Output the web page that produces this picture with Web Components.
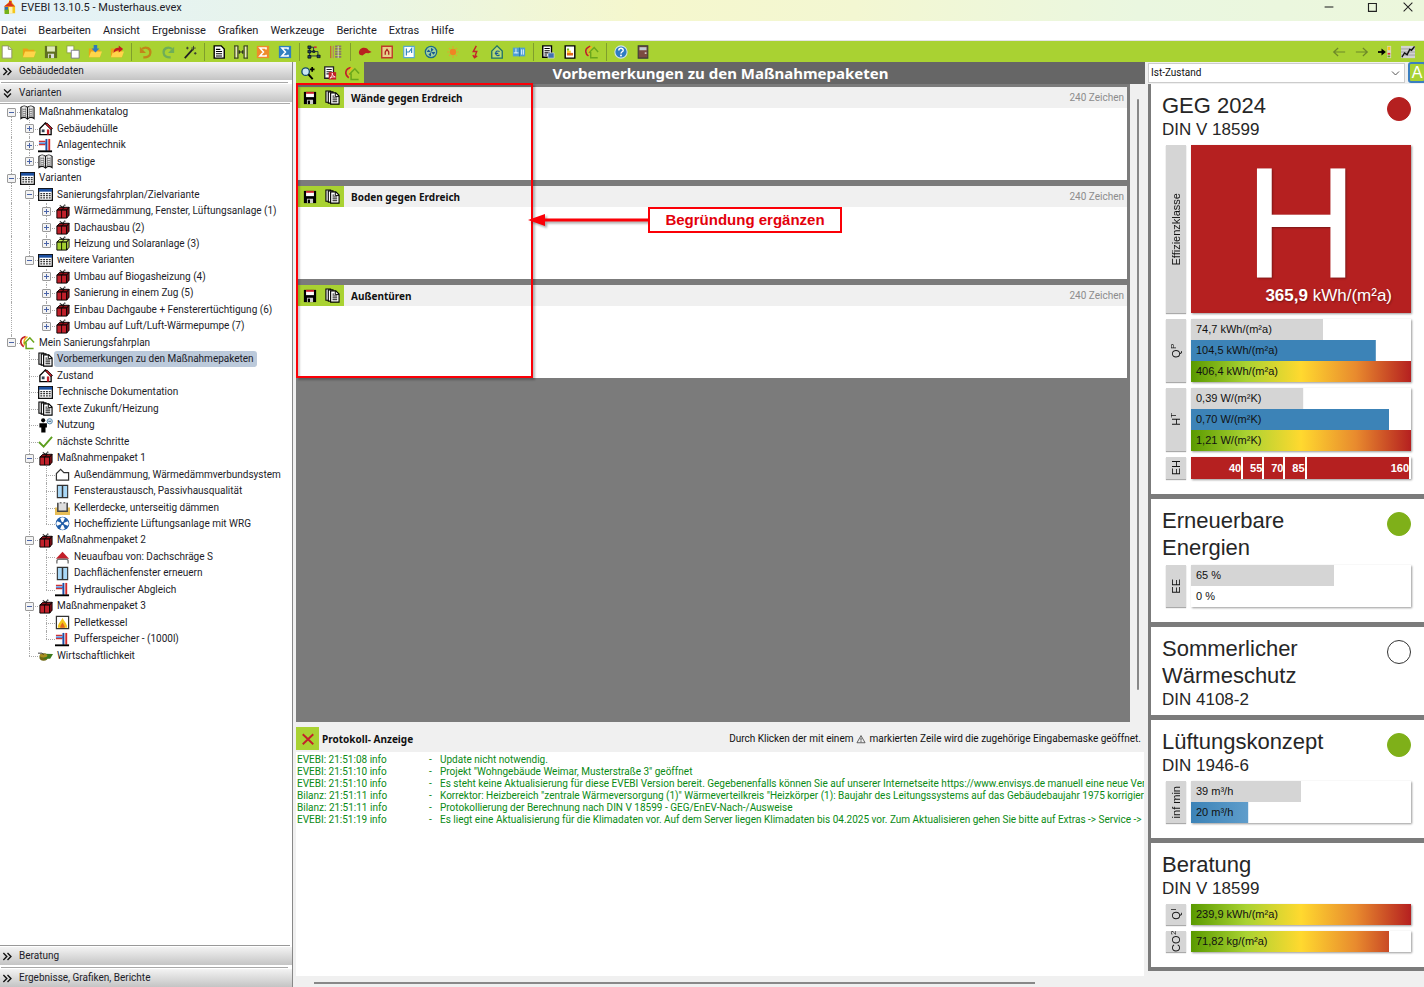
<!DOCTYPE html>
<html lang="de">
<head>
<meta charset="utf-8">
<title>EVEBI 13.10.5 - Musterhaus.evex</title>
<style>
  html, body { margin: 0; height: 100%; }
  body {
    --lime: #a9d232;
    --grey: #7b7b7b;
    --face: #f0f0f0;
    --ui: Roboto, "Liberation Sans", Arial, sans-serif;
    --kpi: "Liberation Sans", Arial, sans-serif;
    --menu: Roboto, "Open Sans", sans-serif;
    --strong: "Noto Sans", "Open Sans", sans-serif;
    font: 10px/16px var(--ui);
    color: #1c1c28;
    background: var(--face);
  }
</style>
</head>
<body>
<evebi-app></evebi-app>

<script>
const house = (x = '') => `<path d="M2 8 8 2l6 6v6.500H2z" fill="#fff" stroke="#000" stroke-width="1.400"/><path d="M7 2.500h3L15.500 8l-2 1z" fill="#c3202a" stroke="#000" stroke-width=".8"/><path d="M4 9h3v3H4z" fill="#345"/><path d="M9.500 9H12v5.500H9.500z" fill="#c3202a"/>${x}`;
const gift = (a, b) => `<path d="M2 6.500 5 3.500h10L12.500 6.500z" fill="${b}" stroke="#000"/><path d="M2 6.500h10.500v8.500H2z" fill="${a}" stroke="#000"/><path d="M12.500 6.500 15 3.500v8.500l-2.500 3z" fill="${b}" stroke="#000"/><path d="M7 6.500V15M7 6.500l3-3" stroke="#000" fill="none" stroke-width=".9"/><path d="M8 3.500C5 0 4 2 8 3.500 10 0 13 0 8.500 3.500" fill="none" stroke="#000" stroke-width=".8"/>`;
const pages = `<path d="M1 1h5v12H1z" fill="#fff" stroke="#000" stroke-width="1.200"/><path d="M3.500 2h5v12h-5z" fill="#fff" stroke="#000" stroke-width="1.200"/><path d="M6 3h5.500L15 6.500V15H6z" fill="#fff" stroke="#000" stroke-width="1.200"/><path d="M11 3v4h4M8 8.500h5M8 10.500h5M8 12.500h5M8 6.500h2" fill="none" stroke="#000"/>`;
const book = `<path d="M8 2.500C6 .5 3 .5 1 2.500v12c2-1.500 5-1.500 7 .5 2-2 5-2 7-.5v-12C13 .5 10 .5 8 2.500z" fill="#f2f2f2" stroke="#111" stroke-width="1.200"/><path d="M8 2.500V15" stroke="#111" stroke-width="1.200"/><path d="M3 3v10M5.700 2.500v10.500M10.300 2.500v10.500M13 3v10" stroke="#777" stroke-width=".7"/><path d="M2.800 5c1.500-.8 3-.5 4 .3M2.800 7.300c1.500-.8 3-.5 4 .3M2.800 9.600c1.500-.8 3-.5 4 .3M2.800 11.900c1.500-.8 3-.5 4 .3M9.200 5.300c1.500-.8 3-.8 4-.3M9.200 7.600c1.500-.8 3-.8 4-.3M9.200 9.900c1.500-.8 3-.8 4-.3M9.200 12.200c1.500-.8 3-.8 4-.3" stroke="#555" fill="none" stroke-width=".8"/>`;
const grid = `<path d="M.7 1.700h14.600v12.600H.7z" fill="#fff" stroke="#111" stroke-width="1.400"/><path d="M1 2h14v3H1z" fill="#1b4fa0"/><path d="M2.500 7h11M2.500 9.300h11M2.500 11.600h11" stroke="#333" stroke-width="1.300" stroke-dasharray="2 1"/>`;
const isfp = `<path d="M4 12.500C0 10 0 5 3 3l3-1.500" fill="none" stroke="#c3202a" stroke-width="1.800"/><path d="M8 2C4.500 3 3.500 8 5 11" fill="none" stroke="#f2b01e" stroke-width="1.800"/><path d="M4.500 9 10.500 3l4.500 5M6.500 8v6.500h8" fill="none" stroke="#6aa61c" stroke-width="1.600"/>`;
const pipes = `<path d="M1 3.500h7M1 7h7" stroke="#c33" stroke-width="1.300"/><path d="M1 5.500h8v8" fill="none" stroke="#2a66c8" stroke-width="1.300"/><path d="M9 1v12.500" stroke="#1d4fa5" stroke-width="2"/><path d="M12 1v12.500" stroke="#d02a2a" stroke-width="2"/><path d="M0 14.200h15" stroke="#000" stroke-width="2"/>`;
const win = `<path d="M2.500 1.500h11v13h-11z" fill="#a9d8f7" stroke="#333" stroke-width="1.200"/><path d="M8 1.500v13" stroke="#333" stroke-width="1.600"/>`;
const floppy = c => `<path d="M1 1h14v14H1z" fill="${c}"/><path d="M3.500 1.500h9v6h-9z" fill="#dfeab8"/><path d="M4.500 10h7v5h-7z" fill="#ddd"/><path d="M5.500 11h2.500v4H5.500z" fill="${c}"/>`;
const folder = `<path d="M1 4h5l1.500 1.500H14V14H1z" fill="#e8a317"/><path d="M3.500 7.500H16L13.500 14H1z" fill="#ffd54a"/>`;

const ICONS = {
  app: `<path d="M3 7 8 2V0h3v2l4 5v8H3z" fill="#f4c61c"/><path d="M8 1h3v3l4 3.500H2L8 3z" fill="#d9331e"/><path d="M3 8h4v4H3z" fill="#2c6fb5"/><path d="M3 11h5v5H3z" fill="#73b21b"/><path d="M8 8h4v7H8z" fill="#fff2b0"/>`,
  neu: `<path d="M2.500 1h7l4 4v10h-11z" fill="#fff" stroke="#8a8a6a"/><path d="M9.500 1v4h4" fill="#ddd" stroke="#8a8a6a"/>`,
  open: folder,
  save: floppy('#5f7020'),
  copies: `<path d="M1 1h8v8H1z" fill="#fff" stroke="#8aa040"/><path d="M6 6h9v9H6z" fill="#fff" stroke="#778"/>`,
  imp: folder + `<path d="M6.500 0h4v4H13L8.500 8.500 4 4h2.500z" fill="#2f79bb"/>`,
  exp: folder + `<path d="M4 9c0-5 3-6 6-6V.5L15 4.500l-5 4V6C8 6 6 7 4 9z" fill="#c4201f"/>`,
  undo: `<path d="M3.500 4.500C8 1 13.500 4 13 9c-.4 4-4 5.500-8 5" fill="none" stroke="#c28519" stroke-width="2.600"/><path d="M1 2v7h7z" fill="#c28519"/>`,
  redo: `<path d="M12.500 4.500C8 1 2.500 4 3 9c.4 4 4 5.500 8 5" fill="none" stroke="#6fae57" stroke-width="2.600"/><path d="M15 2v7H8z" fill="#6fae57"/>`,
  wand: `<path d="M2 15 11 5" stroke="#222" stroke-width="2"/><path d="M12 1v5M9.500 3.500h5M5 2v3M3.500 3.500h3M14 8v3M12.500 9.500h3" stroke="#333"/>`,
  doc: `<path d="M2.500 1h8L14 4.500V15H2.500z" fill="#fff" stroke="#000" stroke-width="1.600"/><path d="M4.500 5h5M4.500 7.500h7M4.500 10h7M4.500 12.500h7" stroke="#000" stroke-width="1.200"/>`,
  wall: `<path d="M0 1h5M0 15h5M11 1h5M11 15h5" stroke="#222"/><path d="M1 1v14M4.500 1v14M11.500 1v14M15 1v14" stroke="#333" stroke-width="1.200"/><path d="M6 8h4.500M6 6v4M10 6v4" stroke="#222" stroke-width="1.300"/><path d="M2.700 2v12M13.300 2v12" stroke="#e9e0d0" stroke-width="1.600"/>`,
  sumo: `<path d="M1 1h14v14H1z" fill="#ef8b2a"/><path d="M11.500 5V3.500H4.500L8.500 8l-4 4.500h7V11" fill="none" stroke="#fff" stroke-width="1.800"/>`,
  sumb: `<path d="M1 1h14v14H1z" fill="#2f7fc0"/><path d="M11.500 5V3.500H4.500L8.500 8l-4 4.500h7V11" fill="none" stroke="#fff" stroke-width="1.800"/>`,
  flow: `<path d="M3 2.500h4.500v5h5v5M3 2.500v10h10M3 7.500h5" fill="none" stroke="#234" stroke-width="1.100"/><path d="M1 1h3.500v3H1zM1 6h3.500v3H1zM1 12h3.500v3H1zM11.500 11.500H15v3h-3.500zM6.500 6.500h2.500v2H6.500z" fill="#246" stroke="#000" stroke-width=".7"/><path d="M8 1.500h3v2H8z" fill="#c33"/>`,
  layers: `<path d="M2 1v14" stroke="#c33"/><path d="M5 1v14" stroke="#b86" stroke-width="1.500"/><path d="M7 1.500h7M7 4.500h7M7 7.500h7M7 10.500h7M7 13.500h7" stroke="#876" stroke-width="2"/><path d="M10.500 1v14" stroke="#ddd"/>`,
  cap: `<path d="M1 9C1 3 9 1 12 6l3.500 2-3.500 1.500L9 9l-4 3-3-1z" fill="#b8211f"/>`,
  boiler: `<path d="M2 1.500h12v13H2z" fill="#e7d089" stroke="#c0392b" stroke-width="1.600"/><path d="M6 11V8l2-3 2 3v3" fill="none" stroke="#b02020" stroke-width="1.500"/>`,
  pump: `<path d="M2 1.500h12v13H2z" fill="#fff" stroke="#5ba7d4" stroke-width="1.400"/><path d="M5 4v8M5 8h3l3-4v5" fill="none" stroke="#3689bd" stroke-width="1.400"/>`,
  fan: `<circle cx="8" cy="8" r="6.500" fill="#9fd0a0" stroke="#1d6a8c" stroke-width="1.400"/><path d="M8 8V3l3 2zM8 8h5l-2 3zM8 8v5l-3-2zM8 8H3l2-3z" fill="#195b91"/>`,
  sun: `<circle cx="8" cy="8" r="3.600" fill="#ef8424"/><path d="M8 1.500v2M8 12.500v2M1.500 8h2M12.500 8h2M3.500 3.500l1.500 1.500M11 11l1.500 1.500M12.500 3.500 11 5M5 11l-1.500 1.500" stroke="#e8a02e" stroke-width="1.300"/>`,
  bolt: `<path d="M9.500 1 6 7.500h4L7.500 14M5.500 11.500l2 3 3-2" fill="none" stroke="#c4242a" stroke-width="1.600"/>`,
  ehouse: `<path d="M2 7 8 1l6 6v8H2z" fill="#b6dc70" stroke="#20706a" stroke-width="1.500"/><path d="M11 7.500c-3-1.500-4.500 0-4.500 2s2 3.500 4.500 2M5.500 9.500h4" fill="none" stroke="#1a5a94" stroke-width="1.300"/>`,
  panel: `<path d="M1 3h14v10H1z" fill="#4f9fd4"/><path d="M4.500 4v5h3M11 5v6M13 5v6M2 9h3" fill="none" stroke="#e6f4ff" stroke-width="1.100"/><path d="M8.500 3v10" stroke="#2a6ea6"/>`,
  report: `<path d="M2 1h10v13H2z" fill="#fff" stroke="#000" stroke-width="1.600"/><path d="M4 4h6M4 6.500h6M4 9h6M4 11.500h3" stroke="#000" stroke-width="1.200"/><path d="M8 9h7v6H8z" fill="#3e6fb0" stroke="#ddd" stroke-width=".8"/>`,
  label: `<path d="M2.500 1h11v14h-11z" fill="#fff" stroke="#000" stroke-width="1.600"/><path d="M4.500 4H7v2.500H4.500z" fill="#7ab51d"/><path d="M4.500 6.500H9V9H4.500z" fill="#fbd12d"/><path d="M4.500 9h7v3h-7z" fill="#e06a1c"/>`,
  isfp,
  help: `<circle cx="8" cy="8" r="7" fill="#2e7cc2" stroke="#cfe2ee" stroke-width="1.200"/><path d="M5.500 6.200C5.500 3 10.800 3 10.500 6.200 10.300 7.800 8 7.800 8 9.800" fill="none" stroke="#fff" stroke-width="1.700"/><circle cx="8" cy="12" r="1.100" fill="#fff"/>`,
  door: `<path d="M2.500 1h11v14h-11z" fill="#7c4a40" stroke="#3a3a3a" stroke-width="1.200"/><path d="M4 2.500h8V6H4z" fill="#c3cbd2"/><path d="M10 8.500h2V10h-2z" fill="#eee"/>`,
  left: `<path d="M15 8H2M7 3.500 2 8l5 4.500" fill="none" stroke="#6d8729" stroke-width="1.400"/>`,
  right: `<path d="M1 8h13M9 3.500 14 8l-5 4.500" fill="none" stroke="#6d8729" stroke-width="1.400"/>`,
  goto: `<path d="M0 8h5" stroke="#000" stroke-width="2"/><path d="M4 4l5 4-5 4z" fill="#000"/><path d="M10.500 1H15v14h-4.500z" fill="#d9d6c0"/><path d="M11 2h3v4h-3z" fill="#f4c61c"/><path d="M11 9h3v2h-3z" fill="#d33"/><path d="M11 12h3v2h-3z" fill="#6a2"/>`,
  chart: `<path d="M0 1h16v14H0z" fill="#d2d2d2"/><path d="M0 4.500h16M0 8h16M0 11.500h16" stroke="#999"/><path d="M1 14 4 9l3 2 3-6 2 1 3.500-4.500" fill="none" stroke="#111" stroke-width="1.600"/>`,
  search: `<circle cx="6" cy="6" r="4" fill="#c9e6f5" stroke="#124a6a" stroke-width="1.400"/><path d="M9 9l4.500 5" stroke="#000" stroke-width="2"/><path d="M10.500 3.500h5M13 1v5" stroke="#000" stroke-width="1.800"/>`,
  pdf: `<path d="M2 1h10v13H2z" fill="#fff" stroke="#222" stroke-width="1.500"/><path d="M4 4h6M4 6.500h6M4 9h3" stroke="#222" stroke-width="1.200"/><path d="M6.500 7H15v8.500H6.500z" fill="#c3202a"/><path d="M8 14c2-2 3-4 2.500-6 .5 3 1.500 4 3.500 4.500-2-.3-4 .2-6 1.500z" fill="none" stroke="#fff" stroke-width=".9"/>`,
  floppy: `<path d="M1 1h14v14H1z" fill="#000"/><path d="M3.500 1.500h9V7h-9z" fill="#fff"/><path d="M3.500 1h9v2.200h-9z" fill="#c8202c"/><path d="M4.500 10h7v5h-7z" fill="#ccc"/><path d="M5.500 11H8v4H5.500z" fill="#000"/>`,
  pages, book, grid, pipes, win,
  house: house(),
  red: gift('#c0202a', '#8f1018'),
  green: gift('#a5d030', '#c6e85a'),
  person: `<circle cx="5.500" cy="2.500" r="2.200" fill="#000"/><path d="M1.500 5.500h8V10H8v5.500H3.500V10h-2z" fill="#000"/><circle cx="12.500" cy="3.500" r="2.800" fill="#d4e9f7" stroke="#5c88a8"/><path d="M11 3.500h3" stroke="#456"/>`,
  check: `<path d="M1 8.500 6 13.500 15 3" fill="none" stroke="#5c9e1e" stroke-width="2"/>`,
  outline: `<path d="M1.500 14V7L6 2.500 9.500 6h5v8z" fill="#fff" stroke="#333" stroke-width="1.300"/>`,
  cellar: `<path d="M0 8h16v8H0z" fill="#e7bd55"/><path d="M3 3v9h10V3" fill="#ddd" stroke="#444" stroke-width="1.600"/><path d="M5 3h2M9 3h2" stroke="#777" stroke-width="1.500"/>`,
  vent: `<circle cx="8" cy="8" r="7.300" fill="#1f5da8"/><path d="M8 8 5.500 2.500C7 1 9 1 10.500 2.500zM8 8l5.500-2.500C15 7 15 9 13.500 10.500zM8 8l2.500 5.500C9 15 7 15 5.500 13.500zM8 8l-5.500 2.500C1 9 1 7 2.500 5.500z" fill="#fff"/><circle cx="8" cy="8" r="1.600" fill="#1f5da8"/>`,
  roof: `<path d="M8 3 15 10.500H1z" fill="#c3202a"/><path d="M2 15.500v-3l1-1.500h10l1 1.500v3" fill="none" stroke="#777" stroke-width="1.500"/>`,
  flame: `<path d="M1.500 1.500h13v13h-13z" fill="#fff" stroke="#333" stroke-width="1.300"/><path d="M8 3c1 3 5 6 5 10.500H3C3 9 7 6 8 3z" fill="#f3c41c"/><path d="M8 8c1 2 2.500 3.500 2.500 5.500h-5C5.500 11.500 7 10 8 8z" fill="#e0651c"/>`,
  money: `<ellipse cx="6" cy="9.500" rx="4.500" ry="4" fill="#6f6a14"/><path d="M7 6 16 6.500l-3 5H6z" fill="#3d7a1d"/><ellipse cx="6" cy="8" rx="4" ry="2" fill="#a98f1f"/><path d="M0 5.500h4l2 1.500" stroke="#333" fill="none"/>`,
  close: `<path d="M2 2.500 14 14M14 2.500 2 14" stroke="#c3202a" stroke-width="2.200"/>`,
  min: `<path d="M3 8h10" stroke="#222" stroke-width="1.200"/>`,
  max: `<path d="M4 4h9v9H4z" fill="none" stroke="#222" stroke-width="1.300"/>`,
  quit: `<path d="M3 3l10 10M13 3 3 13" stroke="#222" stroke-width="1.200"/>`,
  more: `<path d="M2 3l5 5-5 5M8 3l5 5-5 5" fill="none" stroke="#111" stroke-width="2"/>`,
  down: `<path d="M3 2l5 5 5-5M3 8l5 5 5-5" fill="none" stroke="#111" stroke-width="2"/>`,
  warn: `<path d="M8 2.500 14.500 14h-13z" fill="#eee" stroke="#444" stroke-width="1.300"/><path d="M8 6v4.500M8 11.500v1.500" stroke="#333" stroke-width="1.400"/>`
};

const define = (name, css, html, setup) => customElements.define(name, class extends HTMLElement {
  connectedCallback() {
    if (this.shadowRoot) return;
    const root = this.attachShadow({ mode: 'open' });
    root.innerHTML = `<style>*{box-sizing:border-box}button{font:inherit;color:inherit;border:0;padding:0;margin:0;background:none}${css}</style>` +
      (typeof html === 'function' ? html(this) : html);
    if (setup) setup(this, root);
  }
});
const ico = (name, size = 16) => `<ui-icon name="${name}" style="--size:${size}px"></ui-icon>`;

define('ui-icon',
  `:host{display:inline-flex;flex:none;width:var(--size,16px);height:var(--size,16px)} svg{width:100%;height:100%;display:block}`,
  el => `<svg viewBox="0 0 16 16" aria-hidden="true">${ICONS[el.getAttribute('name')]}</svg>`);

define('title-bar', `
  :host{display:flex;align-items:flex-start;height:21px;padding-left:2px;font:11px/15px var(--menu);
    background:linear-gradient(90deg,#e3f1fa 0,#e9f5e6 25%,#f5f7cd 45%,#f3f7d2 60%,#eaf7e0 80%,#ecf7dc 100%)}
  .name{flex:1;padding-left:5px}
  .win{display:flex} button{width:41px;height:14px;display:grid;place-items:center}
  .win button:first-child{width:44px} .win button:last-child{width:32px}`,
  `${ico('app', 14)}<span class="name">EVEBI 13.10.5 - Musterhaus.evex</span>
   <span class="win"><button aria-label="Minimieren">${ico('min', 14)}</button><button aria-label="Maximieren">${ico('max', 14)}</button><button aria-label="Schließen">${ico('quit', 14)}</button></span>`);

define('menu-bar', `
  :host{display:flex;gap:12px;height:20px;padding-left:1px;background:#fff;border-bottom:1px solid #e4e4e4;font:11px/18px var(--menu)}`,
  ['Datei', 'Bearbeiten', 'Ansicht', 'Ergebnisse', 'Grafiken', 'Werkzeuge', 'Berichte', 'Extras', 'Hilfe'].map(t => `<button>${t}</button>`).join(''));

define('tool-bar', `
  :host{display:flex;justify-content:space-between;height:21px;background:var(--lime);overflow:hidden}
  div{display:flex;align-items:center} .main{margin-left:-4px}
  button{width:22px;height:21px;display:grid;place-items:center}
  i{width:1px;height:18px;margin:0 3px;background:#7f9e2c}
  .nav{padding-right:5px} .nav button{width:23px}`,
  () => {
    const groups = ['neu open save copies imp exp', 'undo redo wand', 'doc wall sumo sumb', 'flow layers', 'cap boiler pump fan sun bolt ehouse panel', 'report label isfp', 'help door'];
    const b = n => `<button aria-label="${n}">${ico(n, 14)}</button>`;
    return `<div class="main">${groups.map(g => g.split(' ').map(b).join('')).join('<i></i>')}</div>
            <div class="nav">${['left', 'right', 'goto', 'chart'].map(b).join('')}</div>`;
  });

define('section-head', `
  :host{display:block}
  button{display:flex;align-items:center;gap:6px;width:100%;height:18px;padding-left:2px;text-align:left;
    background:linear-gradient(#f3f3f3,#dcdcdc 50%,#c4c4c4)}`,
  el => `<button>${ico(el.hasAttribute('open') ? 'down' : 'more', 11)}<slot></slot></button>`);

const TREE = [
  ['Maßnahmenkatalog', 'book', [['Gebäudehülle', 'house', 1], ['Anlagentechnik', 'pipes', 1], ['sonstige', 'book', 1]]],
  ['Varianten', 'grid', [
    ['Sanierungsfahrplan/Zielvariante', 'grid', [['Wärmedämmung, Fenster, Lüftungsanlage (1)', 'red', 1], ['Dachausbau (2)', 'red', 1], ['Heizung und Solaranlage (3)', 'green', 1]]],
    ['weitere Varianten', 'grid', [['Umbau auf Biogasheizung (4)', 'red', 1], ['Sanierung in einem Zug (5)', 'red', 1], ['Einbau Dachgaube + Fensterertüchtigung (6)', 'red', 1], ['Umbau auf Luft/Luft-Wärmepumpe (7)', 'red', 1]]]]],
  ['Mein Sanierungsfahrplan', 'isfp', [
    ['Vorbemerkungen zu den Maßnahmepaketen', 'pages', 0, true], ['Zustand', 'house'], ['Technische Dokumentation', 'grid'], ['Texte Zukunft/Heizung', 'pages'], ['Nutzung', 'person'], ['nächste Schritte', 'check'],
    ['Maßnahmenpaket 1', 'red', [['Außendämmung, Wärmedämmverbundsystem', 'outline'], ['Fensteraustausch, Passivhausqualität', 'win'], ['Kellerdecke, unterseitig dämmen', 'cellar'], ['Hocheffiziente Lüftungsanlage mit WRG', 'vent']]],
    ['Maßnahmenpaket 2', 'red', [['Neuaufbau von: Dachschräge S', 'roof'], ['Dachflächenfenster erneuern', 'win'], ['Hydraulischer Abgleich', 'pipes']]],
    ['Maßnahmenpaket 3', 'red', [['Pelletkessel', 'flame'], ['Pufferspeicher - (1000l)', 'pipes']]],
    ['Wirtschaftlichkeit', 'money']]]
];
define('nav-tree', `
  :host{display:grid;grid-auto-rows:1fr;height:560px;padding-left:3px;overflow:hidden}
  .row{display:flex;align-items:center;white-space:nowrap;min-height:0}
  .g,.t{position:relative;width:17px;align-self:stretch;flex:none}
  .first{width:18px}
  .line::before{content:"";position:absolute;left:8px;top:0;bottom:0;border-left:1px dotted #aaa}
  .start::before{top:50%} .end::before{bottom:50%}
  .t::after{content:"";position:absolute;left:8px;right:0;top:50%;border-top:1px dotted #aaa}
  .t{display:grid;place-items:center}
  .box{position:relative;z-index:1;width:9px;height:9px;border:1px solid #9a9a9a;border-radius:1px;background:linear-gradient(90deg,#4a64a8,#4a64a8) center/5px 1px no-repeat,#f3f3f3}
  .plus{background:linear-gradient(#4a64a8,#4a64a8) center/5px 1px no-repeat,linear-gradient(#4a64a8,#4a64a8) center/1px 5px no-repeat,#f3f3f3}
  .txt{margin-left:1px;padding:0 3px;line-height:16px}
  .sel{background:#bccadb;border-radius:3px}`,
  () => {
    let out = '';
    const walk = (nodes, trail) => nodes.forEach(([text, icon, kids, sel], i) => {
      const last = i === nodes.length - 1, depth = trail.length;
      const guides = trail.map((on, k) => `<span class="g ${k ? '' : 'first'} ${on ? 'line' : ''}"></span>`).join('');
      const box = kids ? `<button class="box ${Array.isArray(kids) ? '' : 'plus'}" aria-label="${text}"></button>` : '';
      out += `<div class="row" role="treeitem" aria-level="${depth + 1}">${guides}<span class="t line ${!depth && !i ? 'start' : ''} ${last ? 'end' : ''}">${box}</span>${ico(icon, 15)}<span class="txt ${sel ? 'sel' : ''}">${text}</span></div>`;
      if (Array.isArray(kids)) walk(kids, [...trail, !last]);
    });
    walk(TREE, []);
    return out;
  },
  el => el.setAttribute('role', 'tree'));

define('side-nav', `
  :host{display:flex;flex-direction:column;border-right:1px solid #888;background:#fff;min-height:0}
  hr{margin:2px 4px 1px 1px;border:0;border-top:1px solid #a8a8a8;width:auto;align-self:stretch}
  .body{flex:1;border-top:1px solid #aaa;border-bottom:1px solid #999;margin:1px 2px 1px 0;min-height:0}`,
  `<section-head>Gebäudedaten</section-head><hr>
   <section-head open>Varianten</section-head>
   <div class="body"><nav-tree></nav-tree></div>
   <section-head>Beratung</section-head><hr>
   <section-head>Ergebnisse, Grafiken, Berichte</section-head>`);

define('text-card', `
  :host{display:flex;flex-direction:column;height:93px;background:#fff}
  header{display:flex;align-items:center;height:21px;background:#f0f0f0}
  .b{display:flex;background:var(--lime)} .b button{width:23px;height:21px;display:grid;place-items:center}
  label{flex:1;padding-left:7px;font:bold 10px/20px var(--strong);color:#111}
  span{color:#8c8c8c;padding-right:3px}
  textarea{flex:1;border:0;resize:none;outline:0;width:100%;padding:2px;font:inherit}`,
  el => `<header><div class="b"><button aria-label="Speichern">${ico('floppy', 14)}</button><button aria-label="Textbausteine">${ico('pages', 15)}</button></div>
    <label for="t">${el.getAttribute('heading')}</label><span>240 Zeichen</span></header><textarea id="t"></textarea>`);

define('call-out', `
  :host{position:absolute;left:0;top:21px;pointer-events:none}
  .frame{position:absolute;left:0;top:0;width:237px;height:295px;border:2px solid #fb0007;box-shadow:2px 2px 2px #0004,inset 2px 2px 2px #0003}
  svg{position:absolute;left:232px;top:128px;overflow:visible;filter:drop-shadow(2px 2px 1px #0005)}
  p{position:absolute;left:352px;top:124px;width:194px;height:26px;margin:0;border:2px solid #fb0007;background:#fff;color:#e3000b;text-align:center;white-space:nowrap;font:bold 15px/21px var(--kpi)}`,
  `<div class="frame"></div><svg width="120" height="18"><path d="M12 9h109" stroke="#fb0007" stroke-width="3"/><path d="M0 9 17 3v12z" fill="#fb0007"/></svg><p><slot></slot></p>`);

define('work-area', `
  :host{display:flex;flex-direction:column;position:relative;min-height:0}
  header{display:flex;height:22px;background:#666}
  .b{display:flex;background:var(--lime);width:68px} .b button{flex:1;display:grid;place-items:center}
  h1{flex:1;margin:0;padding-right:68px;text-align:center;color:#fff;font:bold 15px/22px var(--strong)}
  .scroll{flex:1;display:flex;min-height:0}
  .cards{flex:1;display:flex;flex-direction:column;gap:6px;padding:3px 3px 3px 2px;background:var(--grey)}
  .bar{width:15px;padding:15px 6px 32px 7px;background:var(--face)} .bar i{display:block;height:100%;background:#888;border-radius:1px}`,
  `<header><div class="b"><button aria-label="Suchen">${ico('search', 15)}</button><button aria-label="PDF">${ico('pdf', 14)}</button><button aria-label="Sanierungsfahrplan">${ico('isfp', 15)}</button></div>
     <h1>Vorbemerkungen zu den Maßnahmepaketen</h1></header>
   <div class="scroll"><div class="cards">
     <text-card heading="Wände gegen Erdreich"></text-card><text-card heading="Boden gegen Erdreich"></text-card><text-card heading="Außentüren"></text-card>
   </div><div class="bar"><i></i></div></div>
   <call-out>Begründung ergänzen</call-out>`);

define('log-panel', `
  :host{display:flex;flex-direction:column;height:265px;min-width:0}
  header{display:flex;align-items:center;height:30px;padding:3px 4px 0 0;gap:3px}
  header button{width:23px;height:23px;background:var(--lime);display:grid;place-items:center}
  h2{flex:1;margin:0;font:bold 10px/20px var(--strong);color:#111}
  p{margin:0;display:flex;align-items:center;gap:3px;color:#111}
  .log{flex:1;background:#fff;overflow:hidden;margin-right:1px;padding:2px 0 0 1px}
  table{border-collapse:collapse;color:#0a8a14;table-layout:fixed;width:100%}
  td{padding:0;line-height:12px;height:12px;white-space:nowrap}
  .a{width:132px}.d{width:11px}
  .bar{height:11px;padding:6px 110px 3px 18px} .bar i{display:block;height:2px;background:#888}`,
  () => {
    const rows = [
      ['EVEBI: 21:51:08 info', 'Update nicht notwendig.'],
      ['EVEBI: 21:51:10 info', 'Projekt "Wohngebäude Weimar, Musterstraße 3" geöffnet'],
      ['EVEBI: 21:51:10 info', 'Es steht keine Aktualisierung für diese EVEBI Version bereit. Gegebenenfalls können Sie auf unserer Internetseite https://www.envisys.de manuell eine neue Ver'],
      ['Bilanz: 21:51:11 info', 'Korrektor: Heizbereich "zentrale Wärmeversorgung (1)" Wärmeverteilkreis "Heizkörper (1): Baujahr des Leitungssystems auf das Gebäudebaujahr 1975 korrigiert'],
      ['Bilanz: 21:51:11 info', 'Protokollierung der Berechnung nach DIN V 18599 - GEG/EnEV-Nach-/Ausweise'],
      ['EVEBI: 21:51:19 info', 'Es liegt eine Aktualisierung für die Klimadaten vor. Auf dem Server liegen Klimadaten bis 04.2025 vor. Zum Aktualisieren gehen Sie bitte auf Extras -> Service ->']];
    return `<header><button aria-label="Schließen">${ico('close', 14)}</button><h2>Protokoll- Anzeige</h2>
      <p><span>Durch Klicken der mit einem</span>${ico('warn', 10)}<span>markierten Zeile wird die zugehörige Eingabemaske geöffnet.</span></p></header>
      <div class="log"><table>${rows.map(r => `<tr><td class="a">${r[0]}</td><td class="d">-</td><td>${r[1].replace(/>/g, '&gt;')}</td></tr>`).join('')}</table></div>
      <div class="bar"><i></i></div>`;
  });

define('bar-gauge', `
  :host{display:grid;grid-template-columns:20px 1fr;gap:5px;font-size:11px;color:#111}
  .l{display:grid;place-items:center;background:#d5d5d5;box-shadow:0 1px 1px #0005;min-height:0}
  .l span{writing-mode:vertical-rl;transform:rotate(180deg);white-space:nowrap;line-height:14px}
  sup{font-size:8px;vertical-align:baseline;position:relative;left:2px;line-height:8px}
  .bars{box-shadow:1px 1px 2px #0006}`,
  el => `<div class="l"><span>${el.getAttribute('label').replace(/\^(.)/, '<sup>$1</sup>')}</span></div><div class="bars"><slot></slot></div>`);

define('bar-line', `
  :host{display:grid;height:21px}
  .f,.v{grid-area:1/1}
  .f{background:var(--fill);clip-path:inset(0 calc(100% - var(--to)) 0 0)}
  .v{position:relative;padding-left:5px;line-height:21px}`,
  `<div class="f"></div><div class="v"><slot></slot></div>`,
  el => {
    const fills = { grey: '#d5d5d5', blue: '#3c83b7', sky: 'linear-gradient(90deg,#3c83b7,#5f9dcb 26%)', scale: 'linear-gradient(90deg,#5a9a00,#a9d232 25%,#ffd92f 50%,#e88a2e 75%,#b52020)' };
    el.style.setProperty('--fill', fills[el.getAttribute('kind')] || 'none');
    el.style.setProperty('--to', (el.getAttribute('to') || 0) + '%');
  });

define('class-tile', `
  :host{display:flex;flex-direction:column;align-items:center;box-sizing:border-box;height:168px;padding-top:16px;background:#b52020;color:#fff;text-shadow:1px 1px 2px #0005}
  .h{font-size:158px;line-height:122px}
  .v{align-self:flex-end;padding-right:19px;font-size:17px;line-height:26px}`,
  `<div class="h">H</div><div class="v"><slot></slot></div>`);

define('eh-scale', `
  :host{display:grid;grid-template-columns:52fr 21fr 21fr 21fr 104fr;height:22px;background:#fff}
  span{background:#b52020;color:#fff;border-right:2px solid #fff;text-align:right;font:bold 11px/22px var(--kpi)}`,
  [40, 55, 70, 85, 160].map(n => `<span>${n}</span>`).join(''));

define('kpi-card', `
  :host{display:flex;flex-direction:column;background:#fff;padding:8px 13px 0 11px;color:#262626;font-family:var(--kpi)}
  .top{display:flex;justify-content:space-between;gap:8px}
  h2{margin:0;font:22px/27px var(--kpi);max-width:170px}
  .dot{flex:none;width:24px;height:24px;margin:5px 0 -5px;border-radius:50%;background:var(--dot,#fff);border:1px solid var(--edge,#333)}
  p{margin:0;font-size:17px;line-height:22px}
  .body{display:grid;gap:6px;padding:4px 0 0 4px}
  :host([bars]) .body{padding-bottom:15px}`,
  el => `<div class="top"><h2>${el.getAttribute('heading')}</h2><span class="dot"></span></div>${el.hasAttribute('norm') ? `<p>${el.getAttribute('norm')}</p>` : ''}<div class="body"><slot></slot></div>`);

define('kpi-panel', `
  :host{display:flex;flex-direction:column;min-height:0}
  .pick{display:flex;height:21px;gap:3px}
  .sel{flex:1;position:relative;display:flex;margin-top:1px;background:#fff;border:1px solid #ccc}
  select{appearance:none;flex:1;border:0;background:none;font:inherit;color:#111;padding:0 2px;outline:0}
  .sel svg{position:absolute;right:4px;top:6px}
  .a{width:18px;margin-right:-2px;border:2px solid #3b7fc0;border-radius:3px;background:var(--lime);color:#fff;font:16px/17px var(--kpi)}
  .list{display:flex;flex-direction:column;gap:5px;background:var(--grey);margin-top:1px;padding:0 0 4px 3px}
  .ok{--dot:#7fb019;--edge:#7fb019}.bad{--dot:#b52020;--edge:#b52020}`,
  `<div class="pick"><div class="sel"><select aria-label="Variante"><option>Ist-Zustand</option></select><svg width="9" height="7"><path d="M1 1.500l3.500 3.500L8 1.500" fill="none" stroke="#555"/></svg></div><button class="a">A</button></div>
   <div class="list">
    <kpi-card class="bad" bars heading="GEG 2024" norm="DIN V 18599">
      <bar-gauge label="Effizienzklasse"><class-tile><b>365,9</b> kWh/(m²a)</class-tile></bar-gauge>
      <bar-gauge label="Q^P"><bar-line kind="grey" to="60">74,7 kWh/(m²a)</bar-line><bar-line kind="blue" to="84">104,5 kWh/(m²a)</bar-line><bar-line kind="scale" to="100">406,4 kWh/(m²a)</bar-line></bar-gauge>
      <bar-gauge label="H^T"><bar-line kind="grey" to="51">0,39 W/(m²K)</bar-line><bar-line kind="blue" to="90">0,70 W/(m²K)</bar-line><bar-line kind="scale" to="100">1,21 W/(m²K)</bar-line></bar-gauge>
      <bar-gauge label="EH"><eh-scale></eh-scale></bar-gauge>
    </kpi-card>
    <kpi-card class="ok" bars heading="Erneuerbare Energien">
      <bar-gauge label="EE"><bar-line kind="grey" to="65">65 %</bar-line><bar-line>0 %</bar-line></bar-gauge>
    </kpi-card>
    <kpi-card heading="Sommerlicher Wärmeschutz" norm="DIN 4108-2"></kpi-card>
    <kpi-card class="ok" bars heading="Lüftungskonzept" norm="DIN 1946-6">
      <bar-gauge label="inf min"><bar-line kind="grey" to="50">39 m³/h</bar-line><bar-line kind="sky" to="26">20 m³/h</bar-line></bar-gauge>
    </kpi-card>
    <kpi-card style="--dot:transparent;--edge:transparent" bars heading="Beratung" norm="DIN V 18599">
      <bar-gauge label="Q^I"><bar-line kind="scale" to="100">239,9 kWh/(m²a)</bar-line></bar-gauge>
      <bar-gauge label="CO^2"><bar-line kind="scale" to="90">71,82 kg/(m²a)</bar-line></bar-gauge>
    </kpi-card>
   </div>`);

define('evebi-app', `
  :host{display:grid;grid-template-rows:auto auto auto minmax(0,1fr);height:100vh;min-height:980px}
  main{display:grid;grid-template-columns:293px minmax(0,1fr) 276px;gap:3px;min-height:0}
  .mid{display:flex;flex-direction:column;min-width:0;min-height:0}
  work-area{flex:1}`,
  `<title-bar></title-bar><menu-bar></menu-bar><tool-bar></tool-bar>
   <main><side-nav></side-nav><div class="mid"><work-area></work-area><log-panel></log-panel></div><kpi-panel></kpi-panel></main>`);
</script>
</body>
</html>
